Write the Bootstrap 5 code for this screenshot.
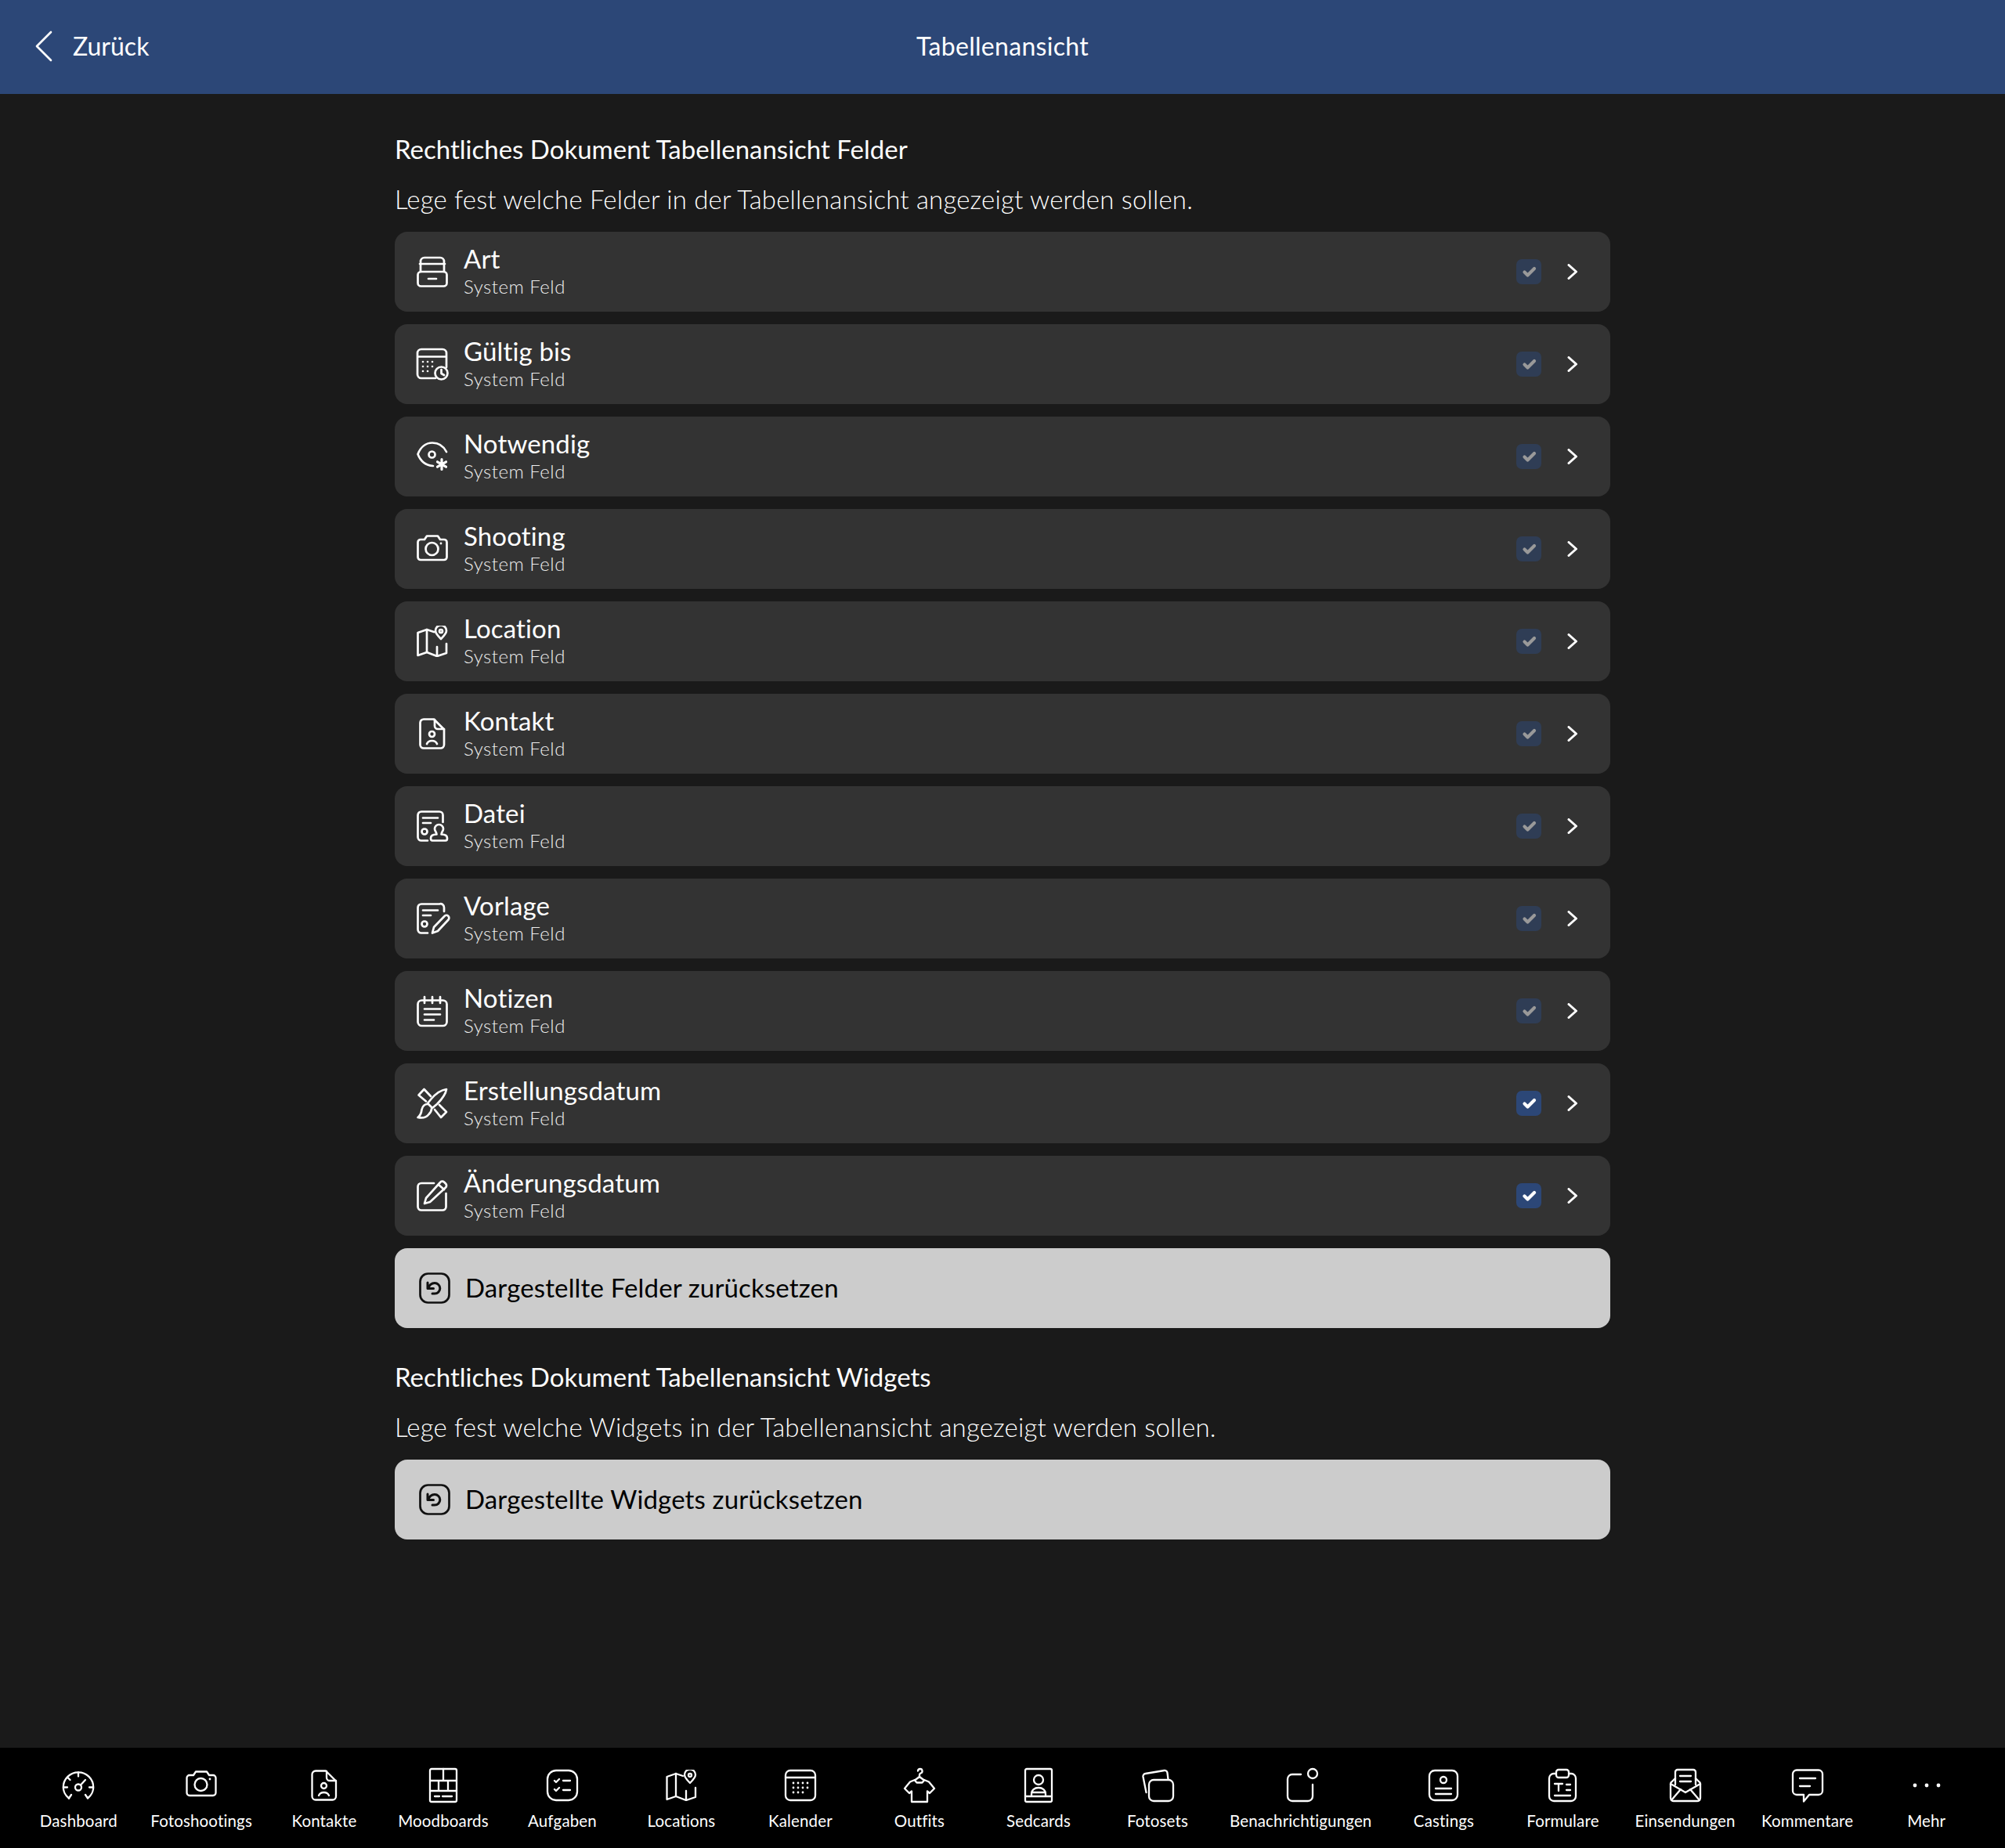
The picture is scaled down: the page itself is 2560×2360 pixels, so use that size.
<!DOCTYPE html>
<html lang="de">
<head>
    <meta charset="UTF-8">
    <title>Tabellenansicht</title>
    <link href="https://cdn.jsdelivr.net/npm/bootstrap@5.3.3/dist/css/bootstrap.min.css" rel="stylesheet">
    <style>
        html, body { height: 100%; }
        body { background: #1a1a1a; color: #fff; font-family: "Lato", "Liberation Sans", sans-serif; font-variant-ligatures: none; }
        .top-bar { height: 120px; background: #2c4777; font-size: 32px; padding-bottom: 2px; letter-spacing: .3px; }
        .back-link { left: 44px; top: 0; height: 120px; padding-bottom: 2px; color: #fff; text-decoration: none; gap: 25px; letter-spacing: 0; }
        .main-col { width: 1552px; padding-top: 50px; }
        .sect-title { font-size: 33px; font-weight: 400; line-height: 40px; margin: 0 0 24px; }
        .sect-title.second { margin-top: 42px; }
        .sect-desc { font-size: 33px; font-weight: 300; line-height: 40px; margin: 0 0 22px; letter-spacing: .18px; }
        .feld-row { height: 102px; background: #333; border-radius: 16px; padding: 0 28px; }
        .feld-ico { width: 40px; height: 40px; flex: none; margin-right: 20px; }
        .feld-name { font-size: 33px; line-height: 38px; letter-spacing: .15px; }
        .feld-sub { font-size: 24px; font-weight: 300; line-height: 34px; color: #eee; letter-spacing: .5px; }
        .check-box { width: 32px; height: 32px; border-radius: 7px; background: #2c4777; margin-right: 33px; flex: none; }
        .check-box.dimmed { opacity: .5; }
        .chev { width: 14px; height: 20px; margin-right: 13px; flex: none; }
        .reset-btn { height: 102px; background: #ccc; border-radius: 16px; color: #000; padding: 0 31px; font-size: 33px; gap: 19px; letter-spacing: .15px; }
        .reset-btn svg { width: 40px; height: 40px; flex: none; stroke: #111; }
        .ico { fill: none; stroke: #fff; stroke-width: 2.7; stroke-linecap: round; stroke-linejoin: round; overflow: visible; }
        .solid { fill: #fff; stroke: none; }
        .star-mark { stroke-width: 3.2; }
        .bottom-bar { height: 128px; background: #000; }
        .tab-item { min-width: 152px; padding: 0 16px; height: 128px; padding-top: 26px; }
        .tab-item svg { width: 44px; height: 44px; display: block; margin-bottom: 10px; stroke-width: 2.3; }
        .tab-label { font-size: 20.5px; line-height: 26px; white-space: nowrap; letter-spacing: .15px; }
    </style>
</head>
<body class="d-flex flex-column">

<!-- shared icons -->
<svg width="0" height="0" class="position-absolute">
    <defs>
        <symbol id="i-camera" viewBox="0 0 40 40">
            <path d="M5 8h5l3-4.500h14l3 4.500h5a3.500 3.500 0 0 1 3.500 3.500v19a3.500 3.500 0 0 1-3.500 3.500H5a3.500 3.500 0 0 1-3.500-3.500v-19A3.500 3.500 0 0 1 5 8z"/>
            <circle cx="19.500" cy="20" r="8"/>
            <circle class="solid" cx="31" cy="13" r="1.400"/>
        </symbol>
        <symbol id="i-map" viewBox="0 0 40 40">
            <path d="M22 8 13 5 1.500 9v29l11.500-4 13 5 12-4V23"/>
            <path d="M13 5v29M26 27v12"/>
            <path d="M31 17c-4-4-7-7-7-10.500a7 7 0 0 1 14 0c0 3.500-3 6.500-7 10.500z"/>
            <circle cx="31" cy="7" r="2"/>
        </symbol>
        <symbol id="i-contact" viewBox="0 0 40 40">
            <path d="M9 1.500h13l13 13V34a4.500 4.500 0 0 1-4.500 4.500H9A4.500 4.500 0 0 1 4.500 34V6A4.500 4.500 0 0 1 9 1.500z"/>
            <path d="M23 2v8a4 4 0 0 0 4 4h8"/>
            <circle cx="19.500" cy="20.500" r="3.500"/>
            <path d="M13 33c1-2.500 3.500-4 6.500-4s5.500 1.500 6.500 4"/>
        </symbol>
        <symbol id="i-undo" viewBox="0 0 40 40">
            <rect x="1.500" y="1.500" width="37" height="37" rx="10"/>
            <path d="M11 13v7.500h7.500M11.500 20.500c1.500-4 4.500-7 8.500-7a6.800 6.800 0 0 1 0 13.600h-3" stroke-width="3"/>
        </symbol>
        <symbol id="i-check" viewBox="0 0 32 32">
            <path d="M10.500 16.500l4 4L23 12" fill="none" stroke="#fff" stroke-width="4.200" stroke-linecap="round" stroke-linejoin="round"/>
        </symbol>
        <symbol id="i-chev" viewBox="0 0 14 20">
            <path d="M2 1.500 11.500 10 2 18.500" fill="none" stroke="#fff" stroke-width="3" stroke-linecap="round" stroke-linejoin="round"/>
        </symbol>
    </defs>
</svg>

<header class="top-bar position-relative d-flex align-items-center justify-content-center">
    <a href="#" class="back-link position-absolute d-flex align-items-center">
        <svg class="ico" width="24" height="40" viewBox="0 0 24 40"><path d="M21 2 3 20l18 18"/></svg>
        <span>Zurück</span>
    </a>
    <span>Tabellenansicht</span>
</header>

<main class="flex-grow-1">
    <div class="main-col mx-auto">
        <h2 class="sect-title">Rechtliches Dokument Tabellenansicht Felder</h2>
        <p class="sect-desc">Lege fest welche Felder in der Tabellenansicht angezeigt werden sollen.</p>

        <div class="d-flex flex-column gap-3">
            <div class="feld-row d-flex align-items-center">
                <svg class="ico feld-ico" viewBox="0 0 40 40">
                    <path d="M5 20V7a5 5 0 0 1 5-5h20a5 5 0 0 1 5 5v13M4 10h32"/>
                    <rect x="1.500" y="20" width="37" height="18.500" rx="4"/>
                    <path d="M15 29h10"/>
                </svg>
                <div class="flex-grow-1"><div class="feld-name">Art</div><div class="feld-sub">System Feld</div></div>
                <span class="check-box dimmed"><svg width="32" height="32" class="d-block"><use href="#i-check"/></svg></span>
                <svg class="chev"><use href="#i-chev"/></svg>
            </div>
            <div class="feld-row d-flex align-items-center">
                <svg class="ico feld-ico" viewBox="0 0 40 40">
                    <path d="M24 38H6a5 5 0 0 1-5-5V6a5 5 0 0 1 5-5h27a5 5 0 0 1 5 5v18M1 10.500h37"/>
                    <g class="solid">
                        <circle cx="8" cy="17" r="1.300"/><circle cx="14" cy="17" r="1.300"/><circle cx="20" cy="17" r="1.300"/>
                        <circle cx="8" cy="23" r="1.300"/><circle cx="14" cy="23" r="1.300"/><circle cx="20" cy="23" r="1.300"/>
                        <circle cx="8" cy="29" r="1.300"/><circle cx="14" cy="29" r="1.300"/>
                    </g>
                    <circle cx="31.500" cy="31.500" r="8"/>
                    <path d="M31.500 27v5l3.500 2"/>
                </svg>
                <div class="flex-grow-1"><div class="feld-name">Gültig bis</div><div class="feld-sub">System Feld</div></div>
                <span class="check-box dimmed"><svg width="32" height="32" class="d-block"><use href="#i-check"/></svg></span>
                <svg class="chev"><use href="#i-chev"/></svg>
            </div>
            <div class="feld-row d-flex align-items-center">
                <svg class="ico feld-ico" viewBox="0 0 40 40">
                    <path d="M38 14C34 6 27 2.500 20 2.500 12 2.500 5 8 1.500 17 5 26 12 31.500 21 32"/>
                    <circle cx="19.500" cy="17.500" r="4"/>
                    <path class="star-mark" d="M32 23.500v13M26.500 26.800l11 6.400M37.500 26.800l-11 6.400"/>
                </svg>
                <div class="flex-grow-1"><div class="feld-name">Notwendig</div><div class="feld-sub">System Feld</div></div>
                <span class="check-box dimmed"><svg width="32" height="32" class="d-block"><use href="#i-check"/></svg></span>
                <svg class="chev"><use href="#i-chev"/></svg>
            </div>
            <div class="feld-row d-flex align-items-center">
                <svg class="ico feld-ico"><use href="#i-camera"/></svg>
                <div class="flex-grow-1"><div class="feld-name">Shooting</div><div class="feld-sub">System Feld</div></div>
                <span class="check-box dimmed"><svg width="32" height="32" class="d-block"><use href="#i-check"/></svg></span>
                <svg class="chev"><use href="#i-chev"/></svg>
            </div>
            <div class="feld-row d-flex align-items-center">
                <svg class="ico feld-ico"><use href="#i-map"/></svg>
                <div class="flex-grow-1"><div class="feld-name">Location</div><div class="feld-sub">System Feld</div></div>
                <span class="check-box dimmed"><svg width="32" height="32" class="d-block"><use href="#i-check"/></svg></span>
                <svg class="chev"><use href="#i-chev"/></svg>
            </div>
            <div class="feld-row d-flex align-items-center">
                <svg class="ico feld-ico"><use href="#i-contact"/></svg>
                <div class="flex-grow-1"><div class="feld-name">Kontakt</div><div class="feld-sub">System Feld</div></div>
                <span class="check-box dimmed"><svg width="32" height="32" class="d-block"><use href="#i-check"/></svg></span>
                <svg class="chev"><use href="#i-chev"/></svg>
            </div>
            <div class="feld-row d-flex align-items-center">
                <svg class="ico feld-ico" viewBox="0 0 40 40">
                    <path d="M14 38.500H6A4.500 4.500 0 0 1 1.500 34V6A4.500 4.500 0 0 1 6 1.500h23A4.500 4.500 0 0 1 33.500 6v9"/>
                    <path d="M8 9.500h19M8 16h10"/>
                    <circle cx="10" cy="27" r="3.500"/>
                    <path d="M20 38.500c-1.500 0-2-1-2-3 0-3.500 3.500-5 7.500-5 0-3-2.500-4-2.500-7a5.500 5.500 0 0 1 11 0c0 3-2.500 4-2.500 7 4 0 7.500 1.500 7.500 5 0 2-.5 3-2 3z"/>
                </svg>
                <div class="flex-grow-1"><div class="feld-name">Datei</div><div class="feld-sub">System Feld</div></div>
                <span class="check-box dimmed"><svg width="32" height="32" class="d-block"><use href="#i-check"/></svg></span>
                <svg class="chev"><use href="#i-chev"/></svg>
            </div>
            <div class="feld-row d-flex align-items-center">
                <svg class="ico feld-ico" viewBox="0 0 40 40">
                    <path d="M14 38.500H6A4.500 4.500 0 0 1 1.500 34V6A4.500 4.500 0 0 1 6 1.500h23A4.500 4.500 0 0 1 35 6v5"/>
                    <path d="M8 9.500h19M8 16h10"/>
                    <circle cx="10" cy="27" r="3.500"/>
                    <path d="M20 38.500l2-7.500 13.500-14a3.300 3.300 0 0 1 5 4.500L27 36z"/>
                </svg>
                <div class="flex-grow-1"><div class="feld-name">Vorlage</div><div class="feld-sub">System Feld</div></div>
                <span class="check-box dimmed"><svg width="32" height="32" class="d-block"><use href="#i-check"/></svg></span>
                <svg class="chev"><use href="#i-chev"/></svg>
            </div>
            <div class="feld-row d-flex align-items-center">
                <svg class="ico feld-ico" viewBox="0 0 40 40">
                    <rect x="1.500" y="6.500" width="37" height="32.500" rx="5"/>
                    <path d="M10 2v8M20 2v8M30 2v8M10 17.500h20M10 24.500h20M10 31.500h12"/>
                </svg>
                <div class="flex-grow-1"><div class="feld-name">Notizen</div><div class="feld-sub">System Feld</div></div>
                <span class="check-box dimmed"><svg width="32" height="32" class="d-block"><use href="#i-check"/></svg></span>
                <svg class="chev"><use href="#i-chev"/></svg>
            </div>
            <div class="feld-row d-flex align-items-center">
                <svg class="ico feld-ico" viewBox="0 0 40 40">
                    <path d="M12 17.500 2.500 9.500 9.500 2l8.500 9"/>
                    <path d="M23 28l8 10 7-7-9-9"/>
                    <path d="M38 2c-7 1-14 6-19.500 12.500L14 20l6 6 6-5c6-6 11-12 12-19z"/>
                    <path d="M14 21c-4 0-6.500 3-7.500 7-.5 4-2 8-5 10 5 1 11 0 14-4 2-2 3.500-5 3.500-7"/>
                </svg>
                <div class="flex-grow-1"><div class="feld-name">Erstellungsdatum</div><div class="feld-sub">System Feld</div></div>
                <span class="check-box"><svg width="32" height="32" class="d-block"><use href="#i-check"/></svg></span>
                <svg class="chev"><use href="#i-chev"/></svg>
            </div>
            <div class="feld-row d-flex align-items-center">
                <svg class="ico feld-ico" viewBox="0 0 40 40">
                    <path d="M22 4H6a4.500 4.500 0 0 0-4.500 4.500V34A4.500 4.500 0 0 0 6 38.500h27a4.500 4.500 0 0 0 4.500-4.500V17"/>
                    <path d="M10 30l2-7L30 3a3.500 3.500 0 0 1 5-.5l2 2a3.500 3.500 0 0 1 0 5L17 28z"/>
                    <path d="M28 6l7 6"/>
                </svg>
                <div class="flex-grow-1"><div class="feld-name">Änderungsdatum</div><div class="feld-sub">System Feld</div></div>
                <span class="check-box"><svg width="32" height="32" class="d-block"><use href="#i-check"/></svg></span>
                <svg class="chev"><use href="#i-chev"/></svg>
            </div>
            <div class="reset-btn d-flex align-items-center">
                <svg class="ico"><use href="#i-undo"/></svg>
                <span>Dargestellte Felder zurücksetzen</span>
            </div>
        </div>

        <h2 class="sect-title second">Rechtliches Dokument Tabellenansicht Widgets</h2>
        <p class="sect-desc">Lege fest welche Widgets in der Tabellenansicht angezeigt werden sollen.</p>
        <div class="reset-btn d-flex align-items-center">
            <svg class="ico"><use href="#i-undo"/></svg>
            <span>Dargestellte Widgets zurücksetzen</span>
        </div>
    </div>
</main>

<nav class="bottom-bar d-flex justify-content-center">
    <div class="tab-item d-flex flex-column align-items-center">
        <svg class="ico" viewBox="0 0 44 44">
            <path d="M10 38.500C5.500 35 2.800 29 2.800 24.500a19.200 19.200 0 0 1 38.400 0c0 4.500-2.700 10.500-7.200 14l-3-4.500"/>
            <path d="M10 38.500l3-4.500M22 5.500v5M8.500 12l3 3M3 24.500h5M36 24.500h5"/>
            <circle cx="22" cy="24.500" r="4"/>
            <path d="M25 21.500l6-6.500"/>
        </svg>
        <span class="tab-label">Dashboard</span>
    </div>
    <div class="tab-item d-flex flex-column align-items-center">
        <svg class="ico" viewBox="0 0 44 44"><use href="#i-camera" x="2" y="1" width="40" height="40"/></svg>
        <span class="tab-label">Fotoshootings</span>
    </div>
    <div class="tab-item d-flex flex-column align-items-center">
        <svg class="ico" viewBox="0 0 44 44"><use href="#i-contact" x="2" y="2" width="40" height="40"/></svg>
        <span class="tab-label">Kontakte</span>
    </div>
    <div class="tab-item d-flex flex-column align-items-center">
        <svg class="ico" viewBox="0 0 44 44">
            <rect x="5" y="1" width="34" height="42" rx="2"/>
            <path d="M5 16h34M22 1v15M5 29h34M16 16v13M28 16v13M11 36h6M21 36h12"/>
        </svg>
        <span class="tab-label">Moodboards</span>
    </div>
    <div class="tab-item d-flex flex-column align-items-center">
        <svg class="ico" viewBox="0 0 44 44">
            <rect x="3" y="3" width="38" height="38" rx="11"/>
            <path d="M12 16l2 2 4-4M12 27l2 2 4-4M23 16h9M23 28h9"/>
        </svg>
        <span class="tab-label">Aufgaben</span>
    </div>
    <div class="tab-item d-flex flex-column align-items-center">
        <svg class="ico" viewBox="0 0 44 44"><use href="#i-map" x="2" y="2" width="40" height="40"/></svg>
        <span class="tab-label">Locations</span>
    </div>
    <div class="tab-item d-flex flex-column align-items-center">
        <svg class="ico" viewBox="0 0 44 44">
            <rect x="3" y="3" width="38" height="38" rx="6"/>
            <path d="M3 12h38"/>
            <g class="solid">
                <circle cx="13" cy="19" r="1.400"/><circle cx="19" cy="19" r="1.400"/><circle cx="25" cy="19" r="1.400"/><circle cx="31" cy="19" r="1.400"/>
                <circle cx="13" cy="25" r="1.400"/><circle cx="19" cy="25" r="1.400"/><circle cx="25" cy="25" r="1.400"/><circle cx="31" cy="25" r="1.400"/>
                <circle cx="13" cy="31" r="1.400"/><circle cx="19" cy="31" r="1.400"/><circle cx="25" cy="31" r="1.400"/>
            </g>
        </svg>
        <span class="tab-label">Kalender</span>
    </div>
    <div class="tab-item d-flex flex-column align-items-center">
        <svg class="ico" viewBox="0 0 44 44">
            <path d="M20 3.500a2.800 2.800 0 1 1 3.500 3c-1 .5-1.500 1-1.500 2v2.500"/>
            <path d="M22 11l-6 4.500 2.500 3h7l2.500-3z"/>
            <path d="M16 15 10 17.500 3 26l6 6 3-2.500V43h20V29.500l3 2.500 6-6-7-8.500-6-2.500"/>
        </svg>
        <span class="tab-label">Outfits</span>
    </div>
    <div class="tab-item d-flex flex-column align-items-center">
        <svg class="ico" viewBox="0 0 44 44">
            <rect x="5" y="1" width="34" height="42" rx="2"/>
            <circle cx="22" cy="15" r="6"/>
            <path d="M13 36v-3c0-5 4-8 9-8s9 3 9 8v3M5 36h34M13 31h18"/>
        </svg>
        <span class="tab-label">Sedcards</span>
    </div>
    <div class="tab-item d-flex flex-column align-items-center">
        <svg class="ico" viewBox="0 0 44 44">
            <path d="M7.500 31 3.500 11a3.500 3.500 0 0 1 3-4l24-4a3.500 3.500 0 0 1 4 3l1 8"/>
            <rect x="11" y="15" width="31" height="27" rx="6"/>
        </svg>
        <span class="tab-label">Fotosets</span>
    </div>
    <div class="tab-item d-flex flex-column align-items-center">
        <svg class="ico" viewBox="0 0 44 44">
            <path d="M22 8H11a6 6 0 0 0-6 6v22a6 6 0 0 0 6 6h20a6 6 0 0 0 6-6V21"/>
            <circle cx="37" cy="7" r="6"/>
        </svg>
        <span class="tab-label">Benachrichtigungen</span>
    </div>
    <div class="tab-item d-flex flex-column align-items-center">
        <svg class="ico" viewBox="0 0 44 44">
            <rect x="4" y="3" width="36" height="38" rx="7"/>
            <circle cx="22" cy="15" r="4"/>
            <path d="M12 26h20M12 33h20"/>
        </svg>
        <span class="tab-label">Castings</span>
    </div>
    <div class="tab-item d-flex flex-column align-items-center">
        <svg class="ico" viewBox="0 0 44 44">
            <path d="M14 7h-3a6 6 0 0 0-6 6v23a6 6 0 0 0 6 6h22a6 6 0 0 0 6-6V13a6 6 0 0 0-6-6h-3"/>
            <rect x="14" y="2" width="16" height="10" rx="3"/>
            <path d="M12 20h10M17 20v9M27 21h5M27 28h5M12 35h20"/>
        </svg>
        <span class="tab-label">Formulare</span>
    </div>
    <div class="tab-item d-flex flex-column align-items-center">
        <svg class="ico" viewBox="0 0 44 44">
            <path d="M9 21V5a3 3 0 0 1 3-3h20a3 3 0 0 1 3 3v16"/>
            <path d="M9 13l-4 4a4 4 0 0 0-2 4v17a4 4 0 0 0 4 4h30a4 4 0 0 0 4-4V21a4 4 0 0 0-2-4l-4-4"/>
            <path d="M3 20l19 11 19-11M4 41l12-14M40 41 28 27M15 10h14M15 17h14"/>
        </svg>
        <span class="tab-label">Einsendungen</span>
    </div>
    <div class="tab-item d-flex flex-column align-items-center">
        <svg class="ico" viewBox="0 0 44 44">
            <path d="M8 2.500h28a5 5 0 0 1 5 5V29a5 5 0 0 1-5 5H24l-7 8.500V34H8a5 5 0 0 1-5-5V7.500a5 5 0 0 1 5-5z"/>
            <path d="M12 13h20M12 23h13"/>
        </svg>
        <span class="tab-label">Kommentare</span>
    </div>
    <div class="tab-item d-flex flex-column align-items-center">
        <svg class="ico" viewBox="0 0 44 44">
            <g class="solid"><circle cx="7" cy="22" r="2.400"/><circle cx="22" cy="22" r="2.400"/><circle cx="37" cy="22" r="2.400"/></g>
        </svg>
        <span class="tab-label">Mehr</span>
    </div>
</nav>

</body>
</html>
